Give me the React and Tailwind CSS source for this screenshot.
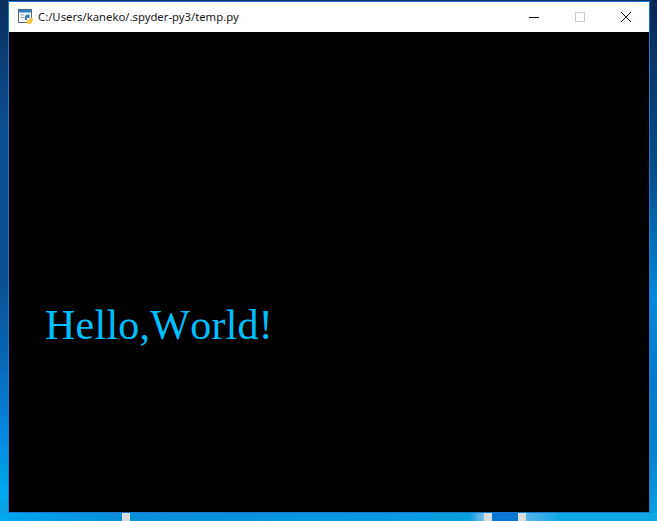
export default function App() {
  return (
    <div className="w-[657px] h-[521px] overflow-hidden flex flex-col bg-[#0a9fe2]">
      <div className="h-[1px] bg-[#0a2f5f]" />
      <div className="flex">
        <div className="w-[8px] bg-[linear-gradient(180deg,#0a3060_0%,#0a4f90_25%,#0a4f90_55%,#0668b8_70%,#0088e0_85%,#00aaf0_96%,#0a9fe6_100%)]" />
        {/* window */}
        <div className="w-[642px] flex flex-col border border-[#1a78d0]">
          {/* title bar */}
          <div className="h-[30px] bg-white flex items-center pl-[9px]">
            <svg width="16" height="16" viewBox="0 0 16 16" className="shrink-0">
              <rect x="0.5" y="0.5" width="13" height="13" fill="#f4f6f8" stroke="#5b6b7b" />
              <rect x="1" y="1" width="12" height="2.5" fill="#2f7fc8" />
              <rect x="2.5" y="5.5" width="4" height="1" fill="#9aa8b5" />
              <rect x="2.5" y="8" width="4" height="1" fill="#9aa8b5" />
              <path d="M7 8 Q7 5.5 9.5 5.5 L11.5 5.5 L11.5 9 L9 9 L9 11 L7 11 Z" fill="#3f7fb5" />
              <path d="M15 9 Q15 15 11 15 Q8.5 15 8.5 13 L8.5 11.5 L11 11.5 L12 9 Z" fill="#f5c93a" />
            </svg>
            <span className="ml-[4px] text-[11.3px] leading-none text-[#1a1a1a] font-['Noto_Sans',sans-serif]">
              C:/Users/kaneko/.spyder-py3/temp.py
            </span>
            <div className="ml-auto flex items-center">
              <div className="w-[46px] h-[30px] flex items-center justify-center">
                <div className="w-[10px] h-[1px] bg-black" />
              </div>
              <div className="w-[46px] h-[30px] flex items-center justify-center">
                <div className="w-[10px] h-[10px] border border-[#cccccc]" />
              </div>
              <div className="w-[46px] h-[30px] flex items-center justify-center">
                <svg width="10" height="10" viewBox="0 0 10 10">
                  <path d="M0 0 L10 10 M10 0 L0 10" stroke="#000" strokeWidth="1" fill="none" />
                </svg>
              </div>
            </div>
          </div>
          {/* canvas */}
          <div className="h-[480px] bg-black pl-[36px] pt-[266px]">
            <div className="text-[42px] leading-[54px] tracking-[0.25px] text-[#00bfff] font-['Liberation_Serif',serif] [font-kerning:none]">
              Hello,World!
            </div>
          </div>
        </div>
        <div className="w-[7px] bg-[linear-gradient(180deg,#0a2a55_0%,#07508f_35%,#0688d8_58%,#0a78c8_75%,#0a80cc_88%,#0aa0e0_100%)]" />
      </div>
      {/* desktop wallpaper below the window */}
      <div className="flex-1 flex">
        <div className="w-[122px] bg-[linear-gradient(90deg,#00a8f0,#0a8fd8)]" />
        <div className="w-[8px] bg-[#d8dde0]" />
        <div className="w-[340px] bg-[linear-gradient(90deg,#0a8fd8,#0a9fe0)]" />
        <div className="w-[14px] bg-[linear-gradient(90deg,#0a9fe0,#7cc0ea)]" />
        <div className="w-[8px] bg-[#d8dde0]" />
        <div className="w-[26px] bg-[#0a78d0]" />
        <div className="w-[8px] bg-[#d8dde0]" />
        <div className="flex-1 bg-[linear-gradient(90deg,#5ab4e6,#0fa6e6_25%)]" />
      </div>
    </div>
  );
}
